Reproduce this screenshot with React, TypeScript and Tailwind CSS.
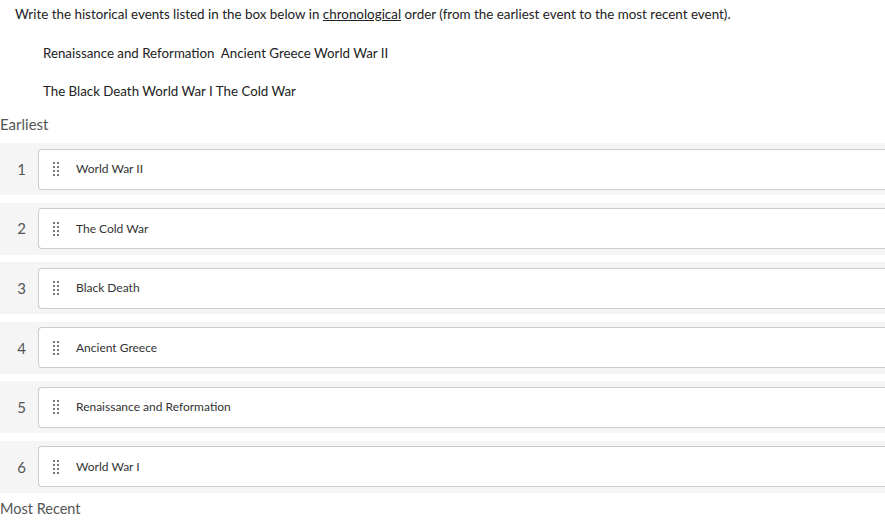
import React from "react";

const items = [
  "World War II",
  "The Cold War",
  "Black Death",
  "Ancient Greece",
  "Renaissance and Reformation",
  "World War I",
];

function Handle() {
  return (
    <div className="grid grid-cols-2 gap-x-[2px] gap-y-[2px] w-[6px]">
      {Array.from({ length: 8 }).map((_, i) => (
        <span key={i} className="block w-[2px] h-[2px] bg-[#777]" />
      ))}
    </div>
  );
}

export default function App() {
  return (
    <div className="w-[885px] h-[523px] overflow-hidden bg-white text-[#2d3b45]" style={{ fontFamily: "Lato, 'Noto Sans', sans-serif" }}>
      <p className="pl-[15px] pt-[5px] text-[13.4px] leading-[18px] text-[#222]">
        Write the historical events listed in the box below in <u>chronological</u> order (from the earliest event to the most recent event).
      </p>
      <p className="pl-[43px] mt-[21px] text-[13.3px] leading-[18px] text-[#222] whitespace-pre">
        Renaissance and Reformation  Ancient Greece World War II
      </p>
      <p className="pl-[43px] mt-[20px] text-[13.3px] leading-[18px] text-[#222] whitespace-pre">
        The Black Death World War I The Cold War
      </p>
      <div className="mt-[15px] text-[15px] leading-[18px] text-[#555]">Earliest</div>
      <div className="mt-[10px] flex flex-col gap-[7.6px]">
        {items.map((t, i) => (
          <div key={i} className="h-[52px] bg-[#f5f5f5] flex items-center">
            <div className="w-[38px] pl-[5px] text-center text-[15px] text-[#555]">{i + 1}</div>
            <div className="flex-1 h-[41px] bg-white border border-[#c7cdd1] rounded-[4px] border-r-0 rounded-r-none flex items-center">
              <div className="pl-[14px] pr-[17px]">
                <Handle />
              </div>
              <span className="text-[12px] text-[#333]">{t}</span>
            </div>
          </div>
        ))}
      </div>
      <div className="mt-[7px] text-[14.5px] leading-[18px] text-[#555]">Most Recent</div>
    </div>
  );
}
